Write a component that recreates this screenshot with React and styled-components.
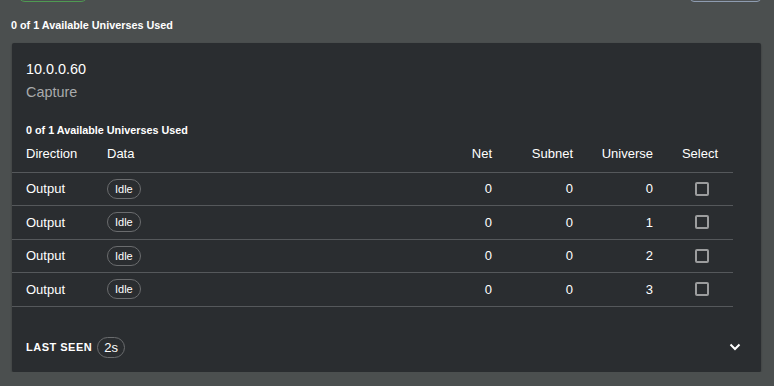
import React from "react";
import styled, { createGlobalStyle } from "styled-components";

const GlobalStyle = createGlobalStyle`
  html, body {
    margin: 0;
    padding: 0;
    background: #4b4f4f;
    font-family: "Liberation Sans", Arial, sans-serif;
    color: #fff;
    overflow: hidden;
  }
`;

const Page = styled.div`
  padding: 0 13px 0 12px;
`;

const TopBar = styled.div`
  display: flex;
  justify-content: space-between;
  align-items: flex-end;
  height: 30px;
  margin-top: -28px;
  padding-left: 6px;
`;

const GhostButton = styled.div`
  width: ${({ width }) => width}px;
  height: 30px;
  box-sizing: border-box;
  border: 1px solid ${({ border }) => border};
  border-radius: ${({ radius }) => radius}px;
  background: ${({ fill }) => fill};
`;

const Caption = styled.div`
  font-size: 10.8px;
  font-weight: bold;
  line-height: 12px;
  margin: ${({ outer }) => (outer ? "17px 0 0 -1px" : "20px 0 0 14px")};
`;

const Card = styled.div`
  margin-top: 12px;
  background: #2a2d30;
  border-radius: 2px;
  box-shadow: 0 1px 2px rgba(0, 0, 0, 0.35);
  padding: 14.5px 28px 0 0;
`;

const Title = styled.div`
  padding-left: 14px;
  font-size: 14.4px;
  line-height: 23px;
  color: ${({ muted }) => (muted ? "#a9abac" : "#fff")};
`;

const Table = styled.div`
  display: flex;
  flex-direction: column;
`;

const Row = styled.div`
  display: grid;
  grid-template-columns: 81px 1fr 81px 81px 80px 66px;
  align-items: center;
  box-sizing: border-box;
  height: ${({ header }) => (header ? "37px" : "33.5px")};
  border-bottom: 1px solid #55585b;
  font-size: 13px;
`;

const Cell = styled.div`
  padding: 0 14px;
  display: flex;
  justify-content: ${({ align }) =>
    align === "right" ? "flex-end" : align === "center" ? "center" : "flex-start"};
  align-items: center;
`;

const Pill = styled.span`
  display: inline-flex;
  align-items: center;
  box-sizing: border-box;
  height: ${({ big }) => (big ? "21px" : "20px")};
  padding: 0 ${({ big }) => (big ? "6px" : "7px")};
  border: 1px solid #6a6c6e;
  border-radius: 11px;
  font-size: ${({ big }) => (big ? "13px" : "11px")};
  font-weight: normal;
  letter-spacing: 0;
`;

const Checkbox = styled.span`
  display: inline-block;
  width: 14px;
  height: 14px;
  box-sizing: border-box;
  border: 2px solid #9c9d9e;
  border-radius: 2px;
  margin-left: 3px;
`;

const Footer = styled.div`
  display: flex;
  align-items: center;
  justify-content: space-between;
  padding: 30px 0 14px 14px;
  margin-right: -8px;
`;

const LastSeen = styled.div`
  display: flex;
  align-items: center;
  gap: 5px;
  font-size: 11px;
  font-weight: bold;
  letter-spacing: 0.5px;
`;

const Chevron = () => (
  <svg width="12" height="8" viewBox="0 0 12 8">
    <polyline
      points="1.5,1.5 6,6 10.5,1.5"
      fill="none"
      stroke="#fff"
      strokeWidth="2"
    />
  </svg>
);

const universes = [0, 1, 2, 3];

export default function App() {
  return (
    <Page>
      <GlobalStyle />
      <TopBar>
        <GhostButton width={70} radius={7} border="#4f9a52" fill="transparent" />
        <GhostButton width={71} radius={4} border="#8e9cb0" fill="#505457" />
      </TopBar>
      <Caption outer>0 of 1 Available Universes Used</Caption>
      <Card>
        <Title>10.0.0.60</Title>
        <Title muted>Capture</Title>
        <Caption>0 of 1 Available Universes Used</Caption>
        <Table>
          <Row header>
            <Cell>Direction</Cell>
            <Cell>Data</Cell>
            <Cell align="right">Net</Cell>
            <Cell align="right">Subnet</Cell>
            <Cell align="right">Universe</Cell>
            <Cell align="center">Select</Cell>
          </Row>
          {universes.map((u) => (
            <Row key={u}>
              <Cell>Output</Cell>
              <Cell>
                <Pill>Idle</Pill>
              </Cell>
              <Cell align="right">0</Cell>
              <Cell align="right">0</Cell>
              <Cell align="right">{u}</Cell>
              <Cell align="center">
                <Checkbox />
              </Cell>
            </Row>
          ))}
        </Table>
        <Footer>
          <LastSeen>
            LAST SEEN <Pill big>2s</Pill>
          </LastSeen>
          <Chevron />
        </Footer>
      </Card>
    </Page>
  );
}
